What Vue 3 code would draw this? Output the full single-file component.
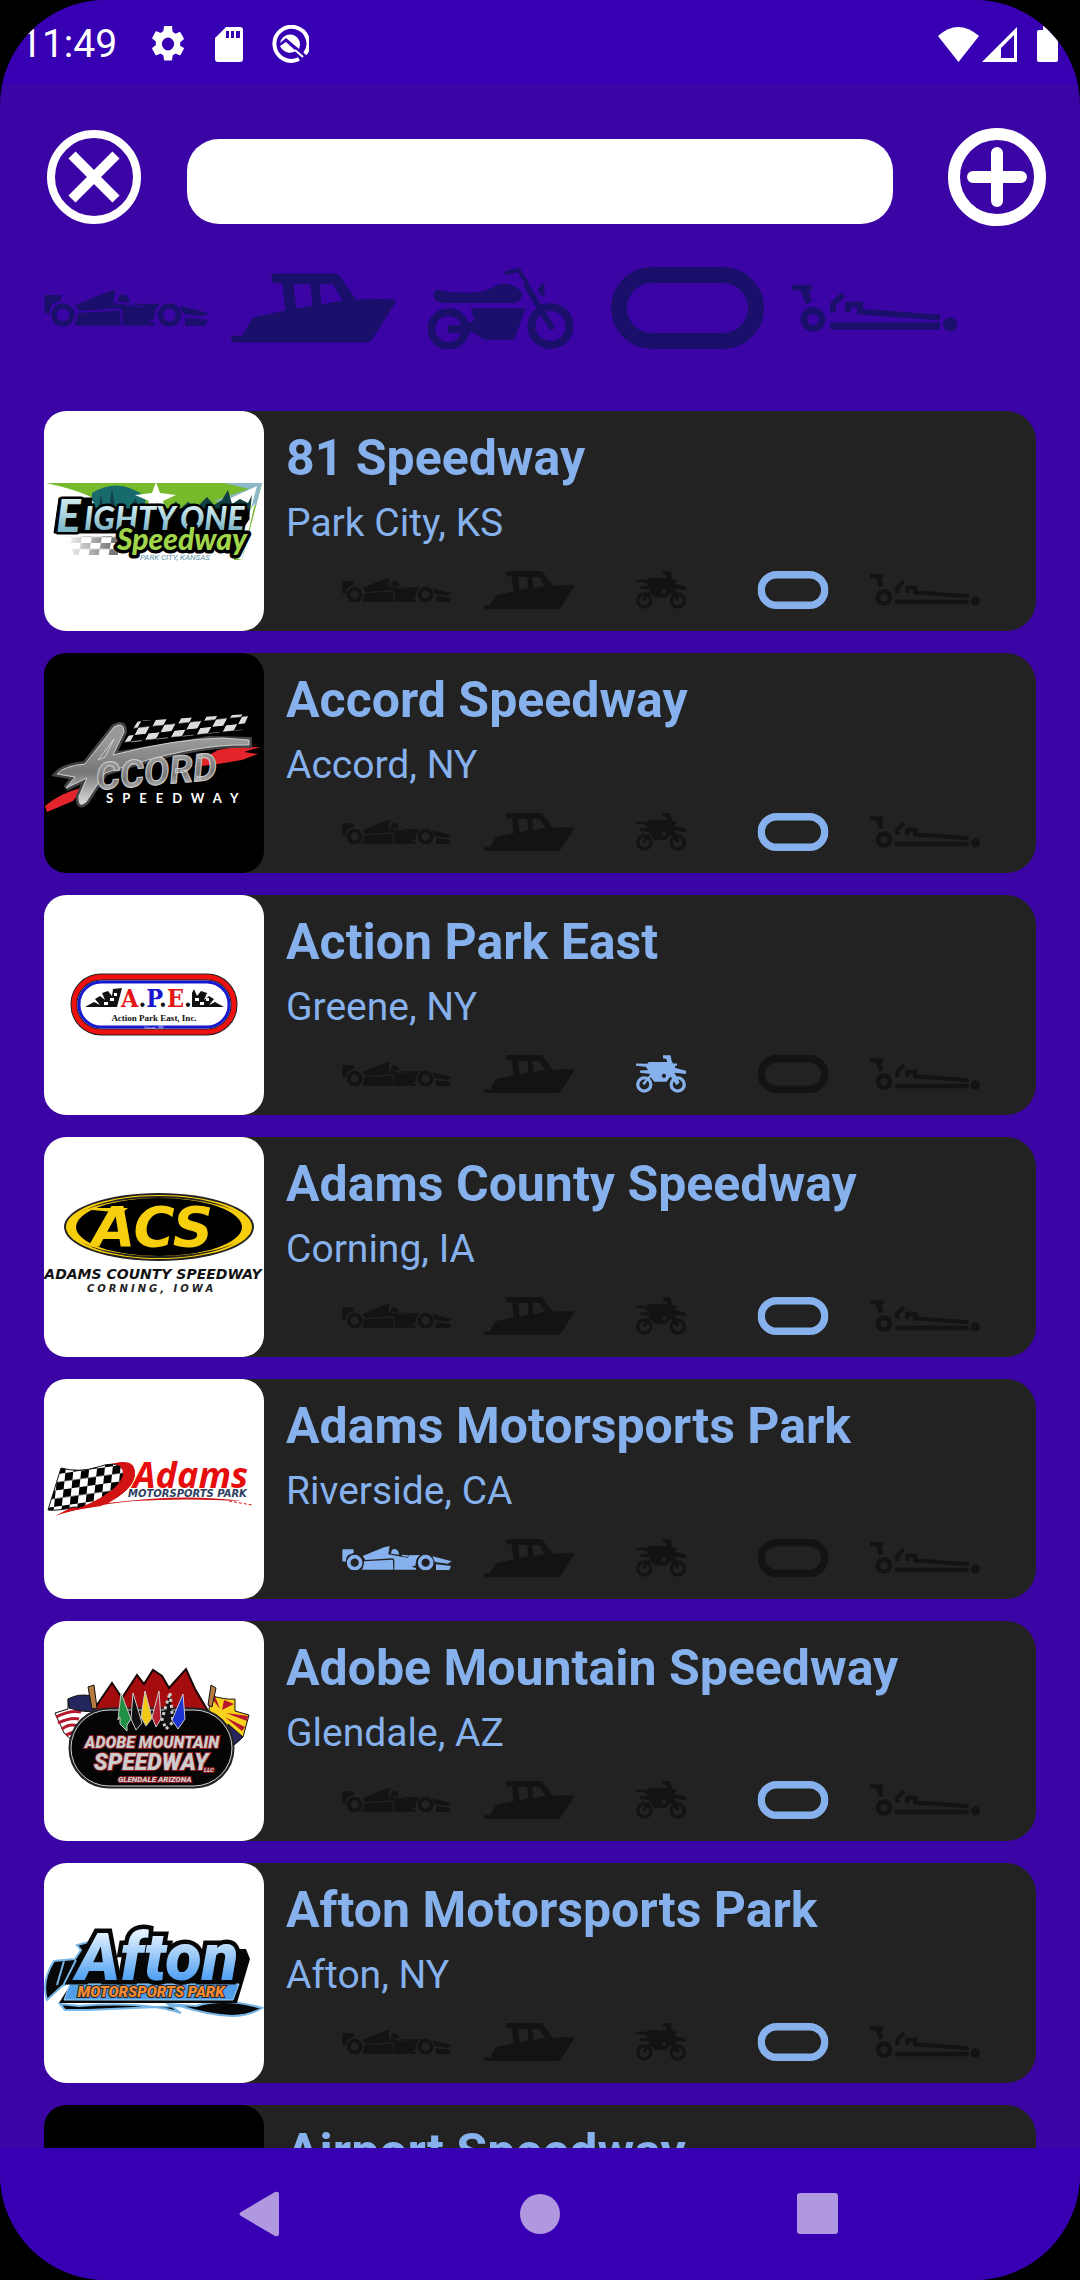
<script setup>
import { ref } from 'vue'

const query = ref('')

const kinds = [
  { id: 'car', label: 'Road course', box: '0 0 330 74' },
  { id: 'boat', label: 'Boat racing', box: '0 0 164 69' },
  { id: 'bike', label: 'Motocross', box: '0 0 154 116' },
  { id: 'oval', label: 'Oval', box: '0 0 153 82' },
  { id: 'drag', label: 'Drag strip', box: '0 0 165 47' },
]

const filters = kinds.map((k) =>
  k.id === 'bike' ? { id: 'cruiser', label: k.label, box: '0 0 146 82' } : k,
)

const tracks = [
  { name: '81 Speedway', place: 'Park City, KS', kind: 'oval', logo: 'eighty-one' },
  { name: 'Accord Speedway', place: 'Accord, NY', kind: 'oval', logo: 'accord', dark: true },
  { name: 'Action Park East', place: 'Greene, NY', kind: 'bike', logo: 'ape' },
  { name: 'Adams County Speedway', place: 'Corning, IA', kind: 'oval', logo: 'acs' },
  { name: 'Adams Motorsports Park', place: 'Riverside, CA', kind: 'car', logo: 'adams' },
  { name: 'Adobe Mountain Speedway', place: 'Glendale, AZ', kind: 'oval', logo: 'adobe' },
  { name: 'Afton Motorsports Park', place: 'Afton, NY', kind: 'oval', logo: 'afton' },
  { name: 'Airport Speedway', place: '', kind: 'oval', logo: '', dark: true },
]
</script>

<template>
  <div class="screen">
    <svg class="defs" aria-hidden="true">
      <symbol id="car" viewBox="0 0 330 74">
        <path fill="currentColor" d="M1 11H35V22L20 27Q10 36 12 48L1 47ZM62 31L126 5L143 1L139 26L178 33L198 36L200 29L234 28Q222 38 222 50L220 60L208 63L222 67V72H157V44Q156 39 151 38L70 43L66 37ZM66 47L151 42Q153 42 153 46L154 72H60Q67 60 66 47ZM147 24Q147 9 159 10Q171 13 171 27ZM180 27L198 29L197 34L179 31ZM271 32L329 47L317 54L279 49ZM282 56L320 60H327L322 73H282Z" />
        <g fill="none" stroke="currentColor" stroke-width="11"><circle cx="38" cy="51" r="18" /><circle cx="251" cy="51" r="18" /></g>
      </symbol>
      <symbol id="boat" viewBox="0 0 164 69">
        <path fill="currentColor" fill-rule="evenodd" d="M44 0H103Q106 0 108 3L125 27Q133 25 162 26Q165 27 163 30L140 66Q138 69 135 69H4Q0 69 0 62H11L20 47Q21 44 25 43L54 37L51 10H44Q40 9 40 5Q40 0 44 0ZM62 11L65 35L81 32L79 11ZM88 11L90 31L111 27L101 11Z" />
      </symbol>
      <symbol id="cruiser" viewBox="0 0 146 82">
        <path fill="currentColor" d="M6 29Q6 22 12 23Q28 27 52 25Q62 23 70 18Q80 14 88 20Q97 25 94 30Q91 36 86 36H18Q7 36 6 29ZM43 41H98L88 70Q87 73 84 73H59Q56 73 54 71L40 62V57L47 53ZM110 22L117 15V30Q111 28 110 22Z" />
        <g fill="none" stroke="currentColor" stroke-linecap="round"><circle cx="21" cy="62" r="17" stroke-width="8" /><circle cx="123" cy="59" r="19" stroke-width="8" /><path d="M24 62H40" stroke-width="8" /><path d="M79 6L91 3L99 15" stroke-width="4" /><path d="M99 19L124 60" stroke-width="6" /></g>
      </symbol>
      <symbol id="bike" viewBox="0 0 154 116">
        <path fill="currentColor" fill-rule="evenodd" d="M0 26L35 27L40 21H96L93 12L83 10V1H106L110 20L114 26H126V33H120V40L154 48V58L118 54L134 84L124 92L106 66L94 82H56L46 68L38 76L26 92L20 86L40 64L44 58L13 54V47L38 46L30 36L0 33ZM86 57A6 6 0 1 0 86 70A6 6 0 1 0 86 57Z" />
        <g fill="none" stroke="currentColor" stroke-width="10"><circle cx="26" cy="90" r="20" /><circle cx="128" cy="90" r="20" /></g>
      </symbol>
      <symbol id="oval" viewBox="0 0 153 82">
        <rect x="8" y="8" width="137" height="66" rx="33" fill="none" stroke="currentColor" stroke-width="16" />
      </symbol>
      <symbol id="drag" viewBox="0 0 165 47">
        <path fill="currentColor" d="M0 0H20V6H17L20 17L14 20L8 6H0ZM65 24L148 30V36L65 30ZM38 38H148V45H38Z" />
        <g fill="none" stroke="currentColor"><circle cx="21" cy="35" r="9" stroke-width="7" /><circle cx="158" cy="40" r="4" stroke-width="6" /><path d="M41 28V20L51 10M56 28V20H68V30" stroke-width="6" /></g>
      </symbol>
      <pattern id="checks" width="16" height="16" patternUnits="userSpaceOnUse" patternTransform="rotate(-8) skewX(-14)">
        <path fill="#fff" d="M0 0H16V16H0Z" /><path fill="#000" d="M0 0H8V8H0ZM8 8H16V16H8Z" />
      </pattern>
      <pattern id="smallchecks" width="26" height="13" patternUnits="userSpaceOnUse" patternTransform="rotate(-6) skewX(-34)">
        <path fill="#ddd" d="M1 0H12V6H1ZM13 6H24V13H13Z" />
      </pattern>
      <pattern id="greychecks" width="20" height="12" patternUnits="userSpaceOnUse" patternTransform="skewX(-10)">
        <path fill="#777" d="M0 0H10V6H0ZM10 6H20V12H10Z" />
      </pattern>
      <linearGradient id="ice" x1="0" y1="0" x2="0" y2="1"><stop offset="0.2" stop-color="#d4edf2" /><stop offset="0.9" stop-color="#6fadc0" /></linearGradient>
      <linearGradient id="steel" x1="0" y1="0" x2="0" y2="1"><stop offset="0.2" stop-color="#999" /><stop offset="0.6" stop-color="#777" /><stop offset="1" stop-color="#ddd" /></linearGradient>
      <linearGradient id="sky" x1="0" y1="0" x2="0" y2="1"><stop offset="0.2" stop-color="#e0f0ff" /><stop offset="0.8" stop-color="#4d9ff2" /></linearGradient>
      <linearGradient id="fade" x1="0" y1="0" x2="1" y2="0"><stop offset="0" stop-color="#fff" /><stop offset="1" stop-color="#fff" stop-opacity="0" /></linearGradient>
    </svg>

    <header class="status">
      <time class="clock">11:49</time>
      <svg class="gear" width="34" height="36" viewBox="2 2 20 20" preserveAspectRatio="none" aria-hidden="true"><path fill="currentColor" d="M19.14 12.94c.04-.3.06-.61.06-.94s-.02-.64-.07-.94l2.03-1.58a.5.5 0 0 0 .12-.61l-1.92-3.32a.49.49 0 0 0-.59-.22l-2.39.96a7 7 0 0 0-1.62-.94l-.36-2.54A.48.48 0 0 0 13.92 2h-3.84a.48.48 0 0 0-.47.41l-.36 2.54c-.59.24-1.13.57-1.62.94l-2.39-.96a.48.48 0 0 0-.59.22L2.74 8.47a.47.47 0 0 0 .12.61l2.03 1.58a6 6 0 0 0 0 1.88l-2.03 1.58a.5.5 0 0 0-.12.61l1.92 3.32c.12.22.37.29.59.22l2.39-.96c.5.38 1.03.7 1.62.94l.36 2.54c.05.24.24.41.48.41h3.84c.24 0 .44-.17.47-.41l.36-2.54c.59-.24 1.13-.56 1.62-.94l2.39.96c.22.08.47 0 .59-.22l1.92-3.32a.47.47 0 0 0-.12-.61zM12 15.6a3.6 3.6 0 1 1 0-7.2 3.6 3.6 0 0 1 0 7.2z" /></svg>
      <svg class="sd" width="28" height="35" viewBox="0 0 28 35" aria-hidden="true"><path fill="currentColor" fill-rule="evenodd" d="M11 0H25Q28 0 28 3V32Q28 35 25 35H3Q0 35 0 32V11ZM11 4V11H14V4ZM16 4V11H19V4ZM21 4V11H25V4Z" /></svg>
      <svg class="quick" width="38" height="38" viewBox="0 0 38 38" aria-hidden="true"><path d="M34 29A17 17 0 1 0 28 34" fill="none" stroke="currentColor" stroke-width="4" /><path fill="currentColor" d="M10 15A10 10 0 0 1 28 24L15 13L9 18ZM9 21L15 17L25 26A11 11 0 0 1 9 21Z" /><path d="M24 25L32 32" stroke="currentColor" stroke-width="2" /></svg>
      <span class="spacer"></span>
      <svg width="41" height="35" viewBox="0 0 41 35" aria-hidden="true"><path fill="currentColor" d="M0 9Q20 -9 41 9L20.500 35Z" /></svg>
      <svg class="signal" width="35" height="35" viewBox="0 0 35 35" aria-hidden="true"><path fill="currentColor" fill-rule="evenodd" d="M35 0V35H0ZM32 8L19 21V31H32Z" /></svg>
      <svg class="battery" width="21" height="36" viewBox="0 0 21 36" aria-hidden="true"><path fill="currentColor" d="M6 0H15V4H19Q21 4 21 6V34Q21 36 19 36H2Q0 36 0 34V6Q0 4 2 4H6Z" /></svg>
    </header>

    <main class="page">
      <form class="search" @submit.prevent>
        <button class="round" type="button" aria-label="Clear search" @click="query = ''">
          <svg width="94" height="94" viewBox="0 0 94 94"><g fill="none" stroke="currentColor"><circle cx="47" cy="47" r="43" stroke-width="8" /><path d="M25 25L69 69M69 25L25 69" stroke-width="10" /></g></svg>
        </button>
        <input v-model="query" class="field" type="text" aria-label="Search tracks" />
        <button class="round add" type="button" aria-label="Add track">
          <svg width="100" height="100" viewBox="0 0 100 100"><g fill="none" stroke="currentColor" stroke-width="12"><circle cx="50" cy="50" r="43" /><path d="M50 26V74M26 50H74" stroke-linecap="round" /></g></svg>
        </button>
      </form>

      <div class="filters">
        <button v-for="f in filters" :key="f.id" class="filter" type="button" :aria-label="f.label">
          <svg :viewBox="f.box"><use :href="'#' + f.id" /></svg>
        </button>
      </div>

      <ul class="tracks">
        <li v-for="t in tracks" :key="t.name" class="card">
          <div class="thumb" :class="{ dark: t.dark }">
            <svg v-if="t.logo === 'eighty-one'" viewBox="0 0 220 220">
              <path fill="#77bb2d" d="M2 72H218L198 149H190L194 120L60 95Q48 82 2 72Z" />
              <path fill="#186b6b" d="M48 82Q75 65 102 86L100 100H48Z" />
              <path fill="#8bb9c7" d="M180 72H218L212 95L170 90L205 78Z" />
              <path fill="#fff" d="M2 76L46 86L50 92H10ZM176 92L213 75L207 97ZM205 100L211 92L198 149L191 147Z" />
              <path fill="#123d42" d="M50 106V94L54 99L57 84L60 99L66 92L68 78L71 97L79 92L83 101L92 87L95 103L104 95L111 101L120 93L125 100L132 90L136 98L144 91L153 96L163 86L170 94L178 89L184 79L188 93L196 88L204 92L208 84L205 109Z" />
              <path fill="#fff" d="M112 71L116 82L132 84L119 90L122 102L112 95L101 102L105 90L91 84L108 82Z" />
              <path fill="url(#greychecks)" d="M22 125H74V144H30Z" /><path fill="url(#fade)" d="M20 123H68V146H20Z" />
              <g font-family="Lato, sans-serif" font-weight="900" font-style="italic" paint-order="stroke" stroke="#000" stroke-linejoin="round">
                <path fill="#000" d="M15 87H48L47 98H204L205 108L196 122H10Z" />
                <text x="12" y="121" font-size="46" fill="url(#ice)" stroke-width="5">E</text>
                <text x="40" y="119" font-size="32" fill="url(#ice)" stroke-width="5">IGHTY</text>
                <text x="136" y="119" font-size="32" fill="url(#ice)" stroke-width="5">ONE</text>
                <text x="73" y="139" font-size="30" fill="#a2d64a" stroke-width="7">Speedway</text>
              </g>
              <text x="96" y="149" font-family="Roboto, sans-serif" font-style="italic" font-size="8" fill="#5b94a5">PARK CITY, KANSAS</text>
            </svg>

            <svg v-else-if="t.logo === 'accord'" viewBox="0 0 220 220">
              <path fill="url(#smallchecks)" d="M94 68L205 61L198 77L80 90Z" />
              <path fill="#e3252b" d="M1 153Q14 141 40 134L29 148L3 159ZM174 97L190 94L216 94L200 99L214 101L198 107L174 111L150 114L158 106Z" />
              <g fill="url(#steel)" stroke="#ccc" font-family="Roboto, sans-serif" font-weight="700" font-style="italic">
                <path stroke="#444" stroke-width="6" d="M13 121Q20 113 41 111L70 74Q80 68 80 79L69 102L165 86L205 87V92Q150 90 61 120L42 149Q34 156 35 143L43 125L22 135L31 124Z" />
                <path d="M13 121Q20 113 41 111L70 74Q80 68 80 79L69 102Q130 86 178 85L205 87V92Q150 90 61 120L42 149Q34 156 35 143L43 125L22 135L31 124ZM54 107L61 104L70 86Z" fill-rule="evenodd" />
                <text x="53" y="137" font-size="38" transform="rotate(-5 53 137)">CCORD</text>
              </g>
              <text x="62" y="150" font-family="Lato, sans-serif" font-weight="700" font-size="13" fill="#fff" class="tracked wide">SPEEDWAY</text>
            </svg>

            <svg v-else-if="t.logo === 'ape'" viewBox="0 0 220 220">
              <rect x="30" y="82" width="160" height="55" rx="27" fill="#fff" stroke="#222" stroke-width="7" />
              <rect x="30" y="82" width="160" height="55" rx="27" fill="none" stroke="#ef1010" stroke-width="5" />
              <rect x="35" y="87" width="150" height="45" rx="22" fill="none" stroke="#1717cf" stroke-width="3" />
              <path fill="#111" d="M41 112L50 107L56 110L51 104L56 101L61 105L58 98L64 96L68 101L69 94L78 93L73 112ZM180 112L171 107L165 110L170 104L165 101L160 105L163 98L157 96L153 101L150 94L148 98V112Z" />
              <path fill="#fff" d="M60 107h4v3h-4zM66 103h4v3h-4zM70 98h3v3h-3zM156 107h4v3h-4zM151 103h4v3h-4zM162 103h3v3h-3z" />
              <text x="77" y="112" font-family="'DejaVu Serif Condensed', 'DejaVu Serif', serif" font-weight="700" font-size="25" fill="#e51616">A<tspan fill="#111">.</tspan><tspan fill="#1717cf">P</tspan><tspan fill="#111">.</tspan>E<tspan fill="#111">.</tspan></text>
              <text x="110" y="126" text-anchor="middle" font-family="'Liberation Serif', serif" font-weight="700" font-size="9" fill="#111">Action Park East, Inc.</text>
              <text x="110" y="134" text-anchor="middle" font-family="'Liberation Serif', serif" font-size="4" fill="#fff">Greene, NY</text>
            </svg>

            <svg v-else-if="t.logo === 'acs'" viewBox="0 0 220 220">
              <ellipse cx="115" cy="90" rx="95" ry="34" fill="#222" />
              <ellipse cx="115" cy="90" rx="93" ry="32" fill="#f8cf0d" />
              <ellipse cx="115" cy="90" rx="88" ry="31" fill="#222" />
              <ellipse cx="115" cy="90" rx="91" ry="29" fill="#f8cf0d" />
              <ellipse cx="115" cy="90" rx="83" ry="29" fill="#000" />
              <text x="48" y="109" font-family="'DejaVu Sans', sans-serif" font-weight="700" font-style="italic" font-size="56" fill="#f8cf0d">ACS</text>
              <path fill="#f8cf0d" d="M47 71H84L78 76L70 75L48 73Z" />
              <text x="109" y="142" text-anchor="middle" font-family="'DejaVu Sans', sans-serif" font-weight="700" font-style="italic" font-size="14" fill="#111">ADAMS COUNTY SPEEDWAY</text>
              <text x="43" y="155" font-family="'DejaVu Sans', sans-serif" font-weight="700" font-style="italic" font-size="10" fill="#222" class="tracked">CORNING, IOWA</text>
            </svg>

            <svg v-else-if="t.logo === 'adams'" viewBox="0 0 220 220">
              <path fill="#d21313" d="M50 90Q88 75 91 94Q91 109 64 124Q140 114 198 122Q140 119 90 122Q40 127 11 137L28 128Z" />
              <path fill="url(#checks)" stroke="#111" d="M17 89Q35 94 54 88Q72 81 80 91Q80 103 64 116Q45 132 30 128Q15 132 4 131Z" />
              <path fill="#d21313" d="M72 84Q91 80 91 94Q91 112 57 127L25 132Q50 125 68 111Q88 94 72 84Z" />
              <path fill="none" stroke="#d21313" stroke-dasharray="3 2" d="M185 122L208 126" />
              <text x="89" y="109" font-family="'Open Sans', sans-serif" font-weight="700" font-style="italic" font-size="36" fill="#e60d0d">Adams</text>
              <text x="84" y="118" font-family="'DejaVu Sans', sans-serif" font-style="italic" font-weight="700" font-size="10" fill="#2c3e60">MOTORSPORTS PARK</text>
            </svg>

            <svg v-else-if="t.logo === 'adobe'" viewBox="0 0 220 220">
              <path fill="#a50c0e" stroke="#180505" stroke-width="2" d="M49 90L57 78L68 62L78 77L93 54L100 63L109 49L118 55L125 67L142 48L151 68L164 90Z" />
              <g stroke="#111">
                <path fill="#fff" d="M24 78L46 74L53 86L33 124L20 112L11 92L24 88Z" />
                <path fill="none" stroke="#b7172d" stroke-width="3" d="M12 96Q26 89 37 91M14 102Q27 96 35 98M18 108Q26 102 33 105M22 114L30 111" />
                <path fill="#24265e" d="M24 78Q35 72 47 75L51 91L37 90L25 87Z" />
                <path fill="#f8d21c" d="M166 74Q180 79 191 78V90L205 94L199 116L190 124L178 100L165 90Z" />
                <path fill="#b7172d" stroke="none" d="M166 75L176 88L171 75ZM180 79L178 89L190 83ZM182 92L204 95L203 100ZM181 96L201 106L198 110Z" />
                <path fill="#27265f" d="M184 103L199 116L190 124Z" />
                <path fill="#b77a40" d="M44 66L50 64L53 87L48 88ZM167 64L172 67L168 86L164 84Z" />
              </g>
              <rect x="26" y="88" width="163" height="78" rx="39" fill="#050505" stroke="#222" stroke-width="3" />
              <rect x="27" y="89" width="161" height="76" rx="38" fill="none" stroke="#c9cfcd" />
              <g stroke="#ccc">
                <path fill="#209044" d="M77 72L87 98L83 104V110L76 103V96L74 99Z" /><path fill="#111" d="M89 72L98 102L92 109L87 98Z" />
                <path fill="#f2c917" d="M101 70L108 97L102 105L97 96Z" /><path fill="#b4202d" d="M115 70L117 98L112 106L108 96Z" />
                <path fill="#111" stroke-dasharray="3 3" stroke-width="3" d="M126 72L129 101L122 108L118 98Z" /><path fill="#1b33cf" d="M139 73L141 98L134 108L128 99Z" />
              </g>
              <g font-family="Roboto, sans-serif" font-weight="900" font-style="italic" fill="#ccc" stroke="#8e1c22" paint-order="stroke" stroke-width="2">
                <text x="108" y="127" text-anchor="middle" font-size="16">ADOBE MOUNTAIN</text>
                <text x="107" y="149" text-anchor="middle" font-size="23">SPEEDWAY</text>
                <text x="74" y="161" font-size="8">GLENDALE ARIZONA</text>
                <text x="160" y="151" font-size="6">LLC</text>
              </g>
            </svg>

            <svg v-else-if="t.logo === 'afton'" viewBox="0 0 220 220">
              <g stroke="#77b6e7" stroke-width="2">
                <path fill="#080808" d="M53 77L33 82L37 87L31 96L10 98Q-3 118 3 137L18 123L40 113ZM20 98L13 122M32 97L19 123" />
                <path fill="#080808" d="M16 141L35 143Q100 138 137 150L124 141L152 143Q180 134 218 145Q205 153 188 153Q164 152 136 143L44 147L21 147Z" />
              </g>
              <path fill="#070707" d="M35 108L54 76L70 110H90L100 86H202L206 96L193 140H15Z" />
              <path fill="#519fea" stroke="#9ed2fa" d="M26 121H195L189 137H20Z" />
              <text x="32" y="117" font-family="Roboto, sans-serif" font-weight="900" font-style="italic" font-size="67" fill="url(#sky)" stroke="#070707" stroke-width="9" paint-order="stroke">Afton</text>
              <text x="107" y="134" text-anchor="middle" font-family="Roboto, sans-serif" font-weight="900" font-style="italic" font-size="15" fill="#f78b32" stroke="#272727" paint-order="stroke" stroke-width="2">MOTORSPORTS PARK</text>
            </svg>
          </div>

          <div class="info">
            <h2 class="name">{{ t.name }}</h2>
            <p v-if="t.place" class="place">{{ t.place }}</p>
            <div class="kinds">
              <svg v-for="k in kinds" :key="k.id" class="kind" :class="{ on: k.id === t.kind }" :viewBox="k.box" role="img" :aria-label="k.label"><use :href="'#' + k.id" /></svg>
            </div>
          </div>
        </li>
      </ul>
    </main>

    <nav class="system">
      <button type="button" aria-label="Back"><svg width="46" height="46" viewBox="0 0 46 46"><path fill="currentColor" d="M2 21L36 1Q40 0 40 3V43Q40 46 36 45L2 25Q-1 23 2 21Z" /></svg></button>
      <button type="button" aria-label="Home"><svg width="46" height="46" viewBox="0 0 46 46"><circle cx="23" cy="23" r="20" fill="currentColor" /></svg></button>
      <button type="button" aria-label="Recent apps"><svg width="46" height="46" viewBox="0 0 46 46"><rect x="2" y="2" width="41" height="41" rx="3" fill="currentColor" /></svg></button>
    </nav>
  </div>
</template>

<style>
body {
  background: #000;
}
</style>

<style scoped>
.screen {
  height: 100vh;
  display: flex;
  flex-direction: column;
  overflow: hidden;
  border-radius: 106px;
  background: #3b05a5;
  color: #fff;
  font-family: Roboto, sans-serif;
}
.defs {
  position: absolute;
  width: 0;
  height: 0;
}
svg {
  display: block;
  flex: none;
}
button {
  padding: 0;
  border: 0;
  background: none;
  color: inherit;
  cursor: pointer;
}
.status {
  flex: none;
  display: flex;
  align-items: center;
  height: 84px;
  padding: 4px 22px 0 20px;
  box-sizing: border-box;
  background: #3700b3;
}
.clock {
  font-size: 39px;
  line-height: 46px;
}
.gear {
  margin-left: 34px;
}
.sd {
  margin-left: 30px;
}
.quick {
  margin-left: 28px;
}
.spacer {
  flex: 1;
}
.signal {
  margin-left: 3px;
}
.battery {
  margin-left: 20px;
}
.page {
  flex: 1;
  min-height: 0;
  display: flex;
  flex-direction: column;
}
.search {
  flex: none;
  display: flex;
  align-items: center;
  gap: 46px;
  padding: 43px 33px 0 47px;
}
.add {
  margin-left: 8px;
}
.field {
  flex: 1;
  min-width: 0;
  height: 85px;
  margin-top: 8px;
  padding: 0 32px;
  box-sizing: border-box;
  border: 0;
  border-radius: 32px;
  outline: 0;
  background: #fff;
  color: #222;
  font: 38px Roboto, sans-serif;
}
.filters {
  flex: none;
  display: flex;
  gap: 22px;
  padding: 40px 44px;
  color: #1a106c;
}
.filter svg {
  width: 165px;
  height: 82px;
}
.tracks {
  flex: 1;
  min-height: 0;
  margin: 0;
  padding: 22px 44px;
  display: flex;
  flex-direction: column;
  gap: 22px;
  overflow-y: auto;
  scrollbar-width: none;
  list-style: none;
}
.card {
  flex: none;
  display: flex;
  border-radius: 30px;
  background: #222;
  color: #86b1ec;
}
.thumb {
  flex: none;
  width: 220px;
  height: 220px;
  overflow: hidden;
  border-radius: 22px;
  background: #fff;
}
.thumb.dark {
  background: #000;
}
.tracked {
  letter-spacing: 3px;
}
.wide {
  letter-spacing: 9px;
}
.info {
  flex: 1;
  min-width: 0;
  padding: 17px 0 0 22px;
}
.name {
  margin: 0;
  font-size: 50px;
  font-weight: 700;
  line-height: 60px;
}
.place {
  margin: 12px 0 25px;
  font-size: 39px;
  line-height: 46px;
}
.kinds {
  display: flex;
  justify-content: center;
  gap: 22px;
}
.kind {
  width: 110px;
  height: 38px;
  color: #131313;
}
.kind.on {
  color: #86b1ec;
}
.system {
  flex: none;
  display: grid;
  grid-template-columns: repeat(3, 278px);
  justify-content: center;
  height: 132px;
  background: #3700b3;
  color: #af98e0;
}
.system button {
  display: grid;
  place-items: center;
}
</style>
